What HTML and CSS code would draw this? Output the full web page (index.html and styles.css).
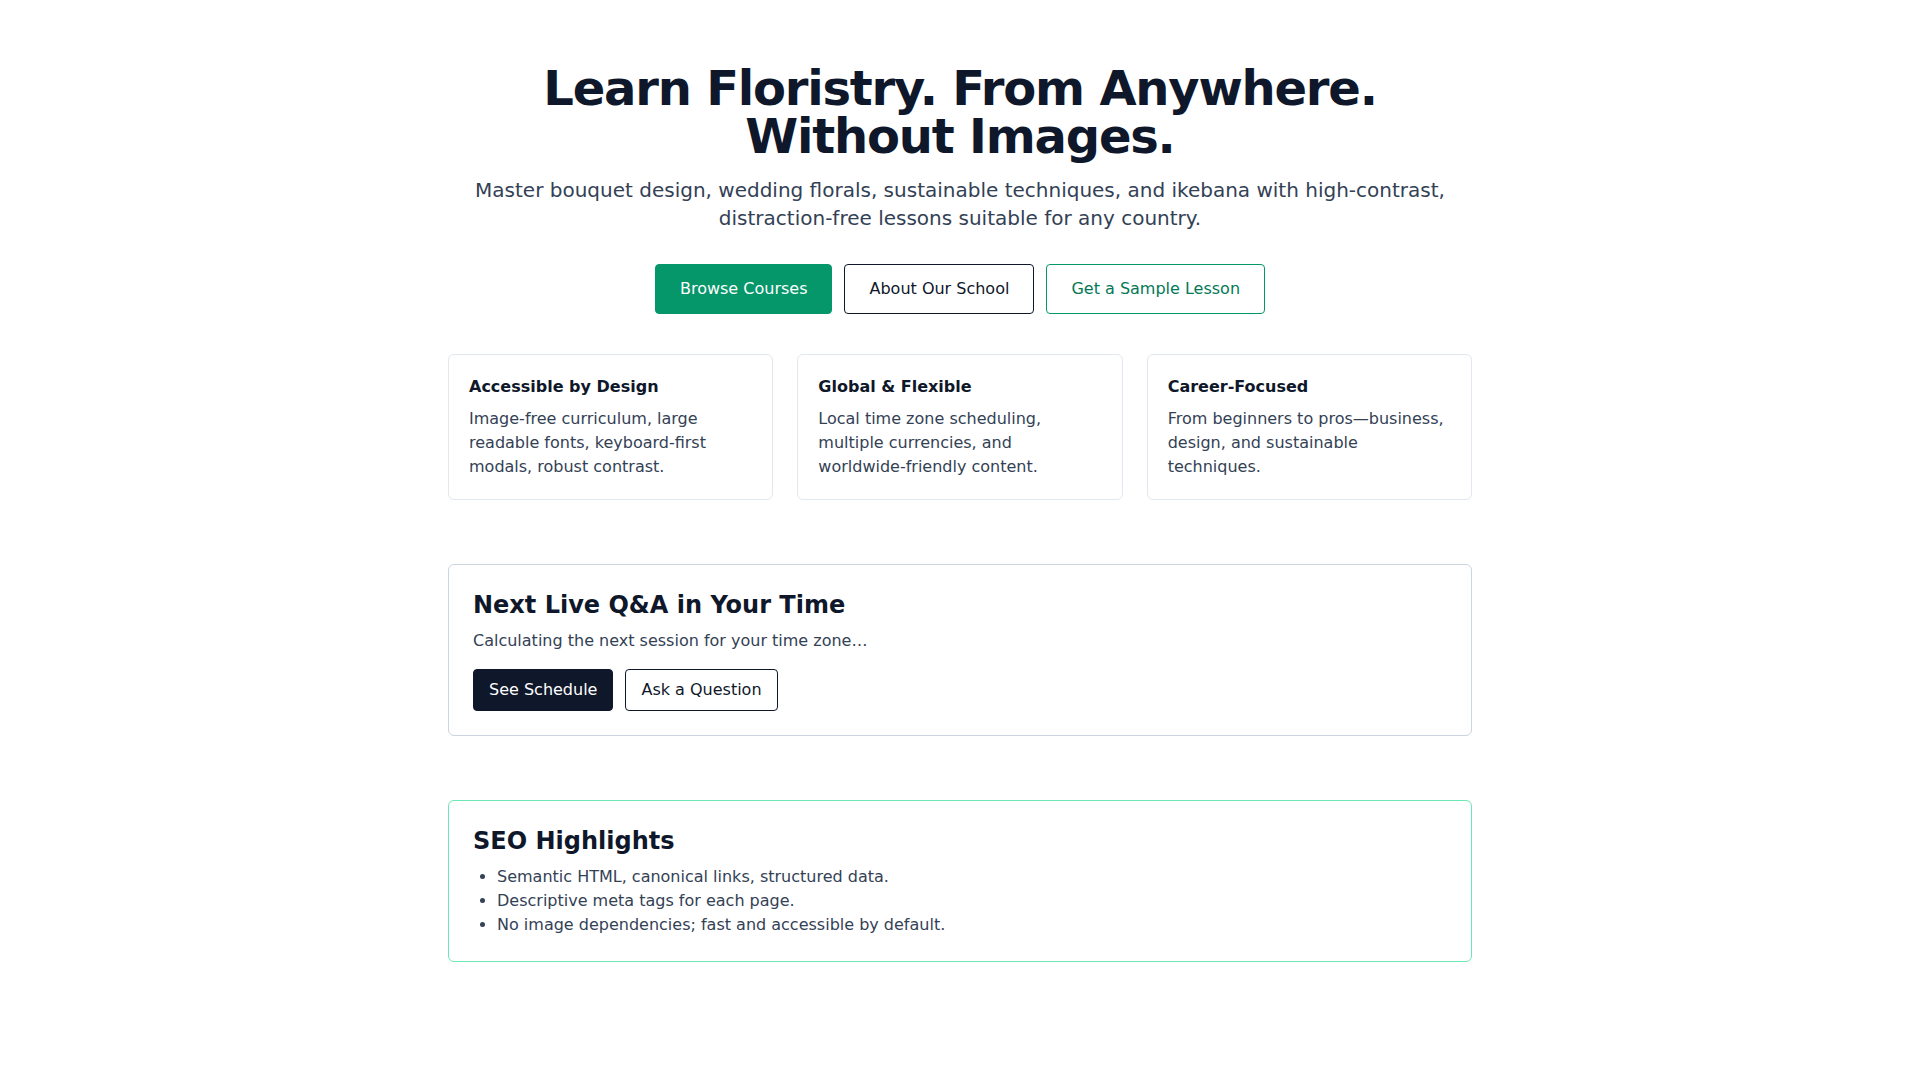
FILE: index.html
```html
<!DOCTYPE html>
<html lang="en">
<head>
<meta charset="utf-8">
<title>Learn Floristry</title>
<link rel="stylesheet" href="styles.css">
</head>
<body>
<main class="page">
  <section class="hero">
    <h1 class="hero-title">Learn Floristry. From Anywhere. Without Images.</h1>
    <p class="hero-sub">Master bouquet design, wedding florals, sustainable techniques, and ikebana with high-contrast, distraction-free lessons suitable for any country.</p>
    <div class="hero-actions">
      <a class="btn btn-lg btn-primary" href="#">Browse Courses</a>
      <a class="btn btn-lg btn-outline-dark" href="#">About Our School</a>
      <a class="btn btn-lg btn-outline-green" href="#">Get a Sample Lesson</a>
    </div>
  </section>

  <section class="features">
    <article class="feature">
      <h3 class="feature-title">Accessible by Design</h3>
      <p class="feature-text">Image-free curriculum, large readable fonts, keyboard-first modals, robust contrast.</p>
    </article>
    <article class="feature">
      <h3 class="feature-title">Global &amp; Flexible</h3>
      <p class="feature-text">Local time zone scheduling, multiple currencies, and worldwide-friendly content.</p>
    </article>
    <article class="feature">
      <h3 class="feature-title">Career-Focused</h3>
      <p class="feature-text">From beginners to pros—business, design, and sustainable techniques.</p>
    </article>
  </section>

  <section class="panel panel-slate">
    <h2 class="panel-title">Next Live Q&amp;A in Your Time</h2>
    <p class="panel-text">Calculating the next session for your time zone…</p>
    <div class="panel-actions">
      <a class="btn btn-sm btn-dark" href="#">See Schedule</a>
      <a class="btn btn-sm btn-outline-dark" href="#">Ask a Question</a>
    </div>
  </section>

  <section class="panel panel-green">
    <h2 class="panel-title">SEO Highlights</h2>
    <ul class="panel-list">
      <li>Semantic HTML, canonical links, structured data.</li>
      <li>Descriptive meta tags for each page.</li>
      <li>No image dependencies; fast and accessible by default.</li>
    </ul>
  </section>
</main>
</body>
</html>
```

FILE: styles.css
```css
* { box-sizing: border-box; }

html, body {
  margin: 0;
  padding: 0;
  background: #ffffff;
}

body {
  font-family: "DejaVu Sans", "Noto Sans", sans-serif;
  color: #0f172a;
  font-size: 16px;
  line-height: 24px;
}

.page {
  max-width: 1024px;
  margin: 0 auto;
  padding: 64px 0;
}

.hero {
  text-align: center;
}

.hero-title {
  margin: 0;
  font-size: 48px;
  line-height: 48px;
  font-weight: 700;
  letter-spacing: -0.025em;
  color: #0f172a;
}

.hero-sub {
  margin: 16px 0 0;
  font-size: 20px;
  line-height: 28px;
  color: #334155;
}

.hero-actions {
  margin-top: 32px;
  display: flex;
  justify-content: center;
  gap: 12px;
}

.btn {
  display: inline-block;
  text-decoration: none;
  border: 1px solid transparent;
  border-radius: 4px;
  font-size: 16px;
  line-height: 24px;
}

.btn-lg { padding: 12px 24px; }
.btn-sm { padding: 8px 15px; }

.btn-primary {
  background: #059669;
  border-color: #059669;
  color: #ffffff;
}

.btn-outline-dark {
  background: #ffffff;
  border-color: #0f172a;
  color: #0f172a;
}

.btn-outline-green {
  background: #ffffff;
  border-color: #059669;
  color: #047857;
}

.btn-dark {
  background: #0f172a;
  border-color: #0f172a;
  color: #ffffff;
}

.features {
  margin-top: 40px;
  display: grid;
  grid-template-columns: repeat(3, 1fr);
  gap: 24px;
}

.feature {
  border: 1px solid #e2e8f0;
  border-radius: 6px;
  padding: 20px;
}

.feature-title {
  margin: 0;
  font-size: 16px;
  line-height: 24px;
  font-weight: 700;
  color: #0f172a;
}

.feature-text {
  margin: 8px 0 0;
  color: #334155;
}

.panel {
  margin-top: 64px;
  border: 1px solid #cbd5e1;
  border-radius: 6px;
  padding: 24px;
}

.panel-green {
  border-color: #6ee7b7;
}

.panel-title {
  margin: 0;
  font-size: 24px;
  line-height: 32px;
  font-weight: 700;
  color: #0f172a;
}

.panel-text {
  margin: 8px 0 0;
  color: #334155;
}

.panel-actions {
  margin-top: 16px;
  display: flex;
  gap: 12px;
}

.panel-list {
  margin: 8px 0 0;
  padding-left: 24px;
  color: #334155;
}
```
